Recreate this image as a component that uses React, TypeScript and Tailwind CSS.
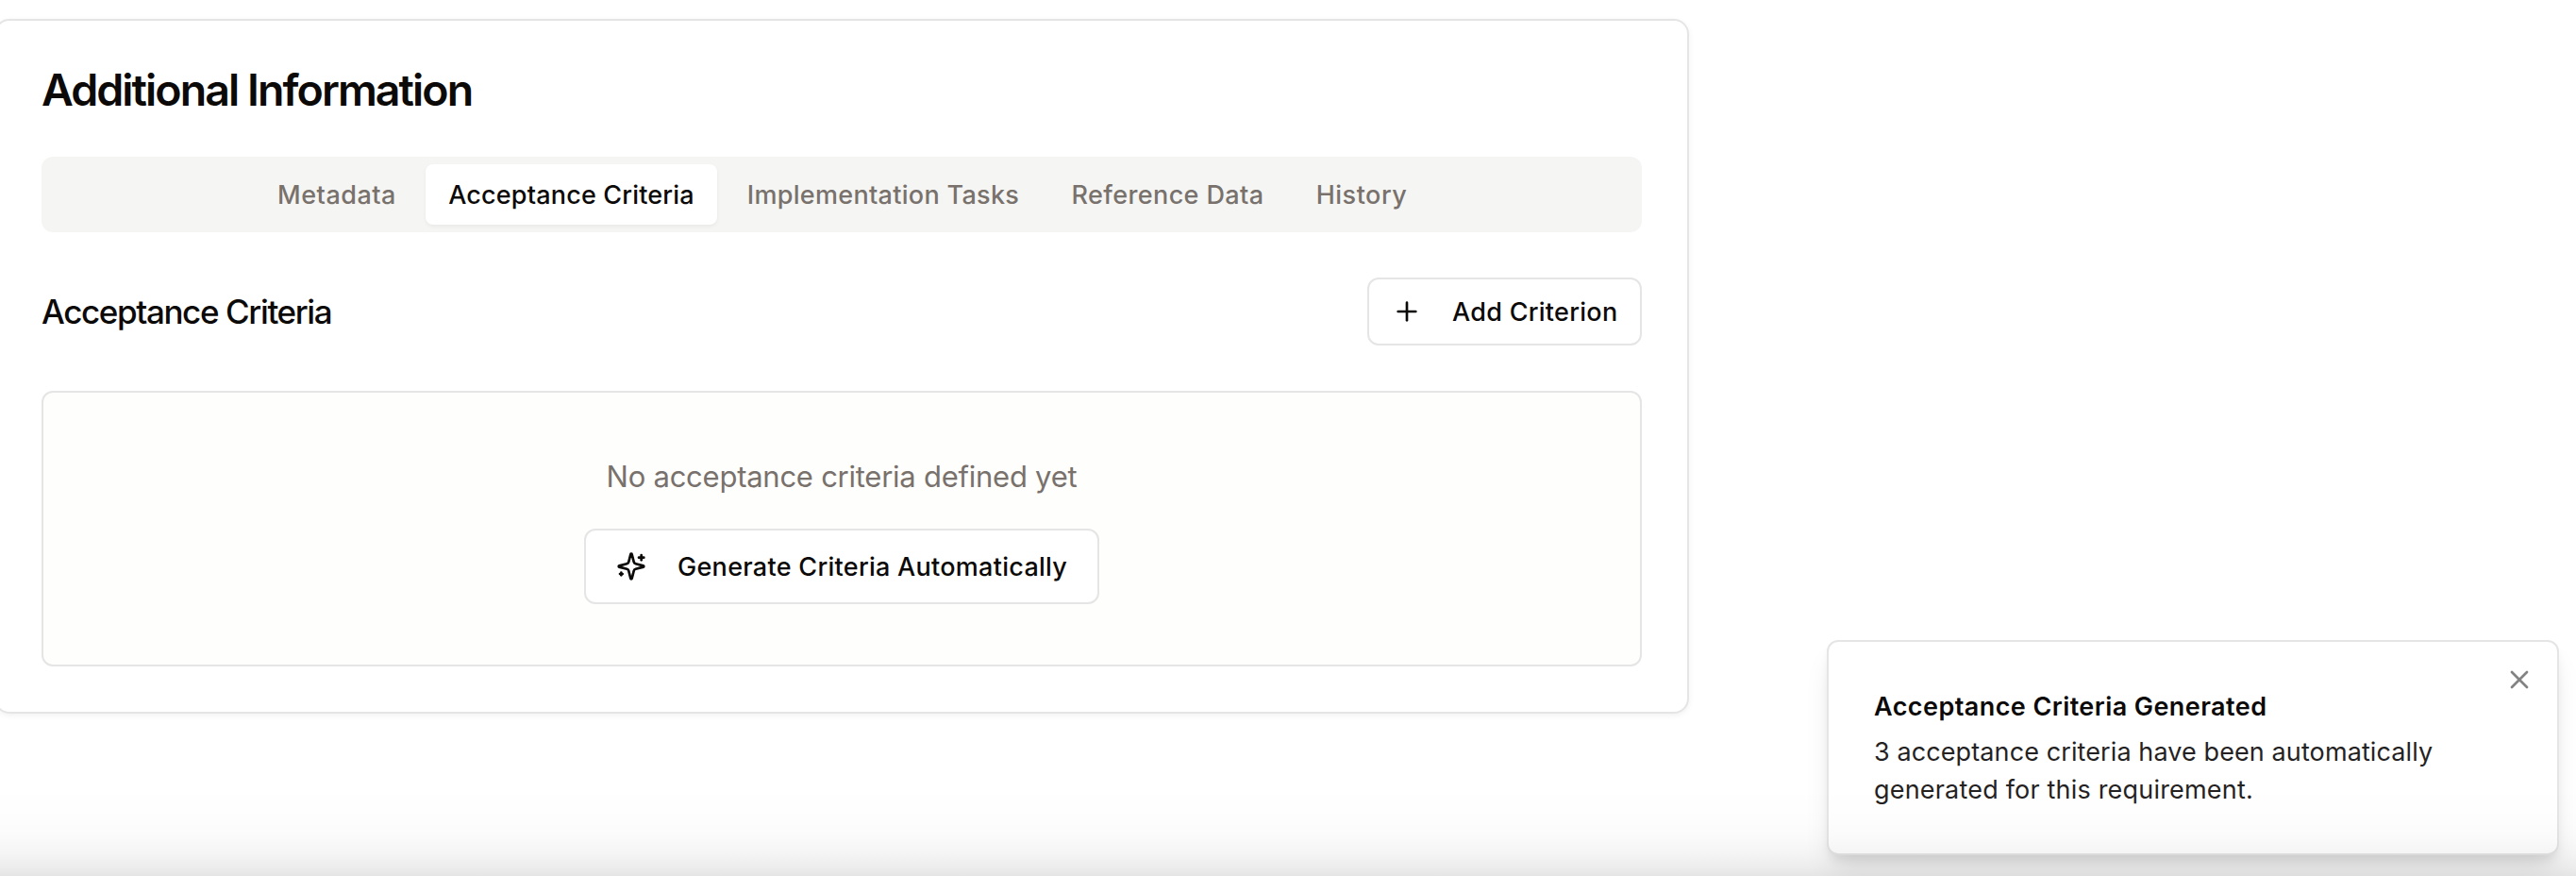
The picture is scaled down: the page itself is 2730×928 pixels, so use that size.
import { Plus, X } from "lucide-react";

const tabs = [
  { label: "Metadata", box: "w-[172px]", tracking: "tracking-[0.5px]" },
  { label: "Acceptance Criteria", box: "w-[309px]", tracking: "tracking-[0.17px]", active: true },
  { label: "Implementation Tasks", box: "w-[336px]", tracking: "tracking-[0.3px]" },
  { label: "Reference Data", box: "w-[251px]", tracking: "tracking-[0.4px]" },
  { label: "History", box: "w-[144px]", tracking: "tracking-[0.5px]" },
];

function Sparkles() {
  return (
    <svg
      viewBox="0 0 24 24"
      className="size-8 shrink-0"
      fill="none"
      stroke="currentColor"
      strokeWidth={2}
      strokeLinecap="round"
      strokeLinejoin="round"
    >
      <path d="M9.937 15.5A2 2 0 0 0 8.5 14.063l-6.135-1.582a.5.5 0 0 1 0-.962L8.5 9.936A2 2 0 0 0 9.937 8.5l1.582-6.135a.5.5 0 0 1 .963 0L14.063 8.5A2 2 0 0 0 15.5 9.937l6.135 1.581a.5.5 0 0 1 0 .964L15.5 14.063a2 2 0 0 0-1.437 1.437l-1.582 6.135a.5.5 0 0 1-.963 0z" />
      <path d="M20 3v4" />
      <path d="M22 5h-4" />
      <path d="M4 17v2" />
      <path d="M5 18H3" />
    </svg>
  );
}

function TabList() {
  return (
    <div className="flex h-20 items-center justify-center gap-2 rounded-xl bg-[#f5f5f4] pl-0.5">
      {tabs.map((tab) => (
        <button
          key={tab.label}
          className={`flex h-16 shrink-0 items-center justify-center rounded-lg pt-0.5 text-[27px] leading-10 font-medium whitespace-nowrap ${tab.box} ${tab.tracking} ${
            tab.active
              ? "bg-white text-[#0c0a09] shadow-[0_2px_4px_rgba(0,0,0,0.05)]"
              : "text-[#78716c]"
          }`}
        >
          {tab.label}
        </button>
      ))}
    </div>
  );
}

function Toast() {
  return (
    <div className="absolute top-[678px] right-[18px] h-[228px] w-[776px] rounded-xl border-2 border-[#e5e5e5] bg-white px-12 pt-[49px] shadow-[0_20px_30px_-6px_rgba(0,0,0,0.1),0_8px_12px_-4px_rgba(0,0,0,0.1)]">
      <div className="flex flex-col gap-2 whitespace-nowrap">
        <div className="text-[27px] leading-10 font-semibold tracking-[0.43px]">
          Acceptance Criteria Generated
        </div>
        <div className="text-[27px] leading-10 tracking-[0.1px] opacity-90">
          3 acceptance criteria have been automatically
          <br />
          <span className="tracking-[0.19px]">generated for this requirement.</span>
        </div>
      </div>
      <button className="absolute top-6 right-6 opacity-50" aria-label="Close">
        <X className="size-8" strokeWidth={2} />
      </button>
    </div>
  );
}

export default function App() {
  return (
    <div className="relative h-[928px] w-[2730px] overflow-hidden bg-white pt-5 font-['Inter',sans-serif] text-[#0c0a09]">
      <section className="-ml-1.5 h-[736px] w-[1796px] rounded-2xl border-2 border-[#e5e5e5] bg-white p-12 shadow-[0_2px_6px_rgba(0,0,0,0.06)]">
        <h2 className="pt-0.5 text-[46.5px] leading-[46px] font-semibold tracking-[-1.93px] whitespace-nowrap">
          Additional Information
        </h2>
        <div className="mt-12">
          <TabList />
        </div>
        <div className="mt-12 flex items-center justify-between">
          <h3 className="text-[35px] font-medium tracking-[-1.38px]">Acceptance Criteria</h3>
          <button className="flex h-[72px] w-[291px] items-center gap-8 rounded-xl border-2 border-[#e5e5e5] bg-white pl-6 text-[27px] font-medium tracking-[0.28px] whitespace-nowrap">
            <Plus className="size-8 shrink-0" strokeWidth={2} />
            <span className="pt-0.5">Add Criterion</span>
          </button>
        </div>
        <div className="mt-12 flex h-[292px] flex-col items-center rounded-xl border-2 border-[#e5e5e5] bg-[#fefefc] pt-[65px]">
          <p className="text-[31px] leading-[48px] tracking-[-0.25px] text-[#78716c]">
            No acceptance criteria defined yet
          </p>
          <button className="mt-[31px] flex h-20 w-[546px] items-center gap-8 rounded-xl border-2 border-[#e5e5e5] bg-white pl-8 text-[27px] font-medium tracking-[0.28px] whitespace-nowrap">
            <Sparkles />
            <span className="pt-0.5 pl-px">Generate Criteria Automatically</span>
          </button>
        </div>
      </section>
      <Toast />
      <div className="pointer-events-none absolute inset-x-0 bottom-0 h-24 bg-[linear-gradient(to_bottom,rgba(0,0,0,0)_0%,rgba(0,0,0,0.006)_40%,rgba(0,0,0,0.02)_58%,rgba(0,0,0,0.045)_76%,rgba(0,0,0,0.075)_91%,rgba(0,0,0,0.1)_100%)]" />
    </div>
  );
}
